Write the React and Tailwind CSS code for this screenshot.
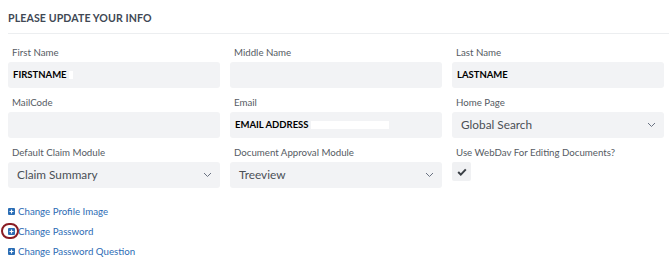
import React from 'react';

const font = { fontFamily: 'Lato, "Open Sans", sans-serif' };

function Chevron() {
  return (
    <svg width="9" height="6" viewBox="0 0 9 6" className="text-gray-500">
      <path d="M1 1l3.5 3.5L8 1" fill="none" stroke="currentColor" strokeWidth="1" />
    </svg>
  );
}

function Field({ label, children }) {
  return (
    <div className="flex flex-col">
      <div className="h-[16px] pl-[4px] text-[9.7px] leading-[12px] text-[#555b63]">{label}</div>
      {children}
    </div>
  );
}

function TextBox({ value, blot }) {
  return (
    <div className="flex h-[26px] items-center rounded-[3px] bg-[#f2f3f5] px-[5px] text-[9.5px] font-bold text-black">
      {value}
      {blot && <span className={`ml-[2px] h-[8px] bg-white ${blot}`} />}
    </div>
  );
}

function Select({ value }) {
  return (
    <div className="flex h-[26px] items-center justify-between rounded-[3px] bg-[#f2f3f5] pl-[9px] pr-[8px] text-[11.8px] text-[#4a4f55]">
      <span>{value}</span>
      <Chevron />
    </div>
  );
}

function PlusIcon() {
  return (
    <svg width="7" height="7" viewBox="0 0 7 7" className="shrink-0">
      <rect width="7" height="7" rx="1" fill="#2a6db5" />
      <path d="M3.5 1.5v4M1.5 3.5h4" stroke="white" strokeWidth="1.2" />
    </svg>
  );
}

function LinkRow({ label, circled }) {
  return (
    <div className="relative flex h-[20px] items-center gap-[3px] text-[9.7px] text-[#2d6cb5]">
      <PlusIcon />
      <span>{label}</span>
      {circled && (
        <span className="absolute left-[-7px] top-[2px] h-[16px] w-[18px] rounded-full border-2 border-[#8a1d24]" />
      )}
    </div>
  );
}

export default function App() {
  return (
    <div className="h-[258px] w-[669px] overflow-hidden bg-white" style={font}>
      <div className="px-[8px] pt-[11px]">
        <div className="h-[22px] text-[10.6px] font-bold leading-[14px] tracking-[0.1px] text-[#404854]">
          PLEASE UPDATE YOUR INFO
        </div>
      </div>
      <div className="ml-[8px] border-t border-[#eceef0]" />
      <div className="grid grid-cols-3 gap-x-[10px] gap-y-[8px] pl-[8px] pr-[5px] pt-[12px]">
        <Field label="First Name"><TextBox value="FIRSTNAME" blot="w-[4px]" /></Field>
        <Field label="Middle Name"><TextBox value="" /></Field>
        <Field label="Last Name"><TextBox value="LASTNAME" /></Field>
        <Field label="MailCode"><TextBox value="" /></Field>
        <Field label="Email"><TextBox value="EMAIL ADDRESS" blot="w-[78px]" /></Field>
        <Field label="Home Page"><Select value="Global Search" /></Field>
        <Field label="Default Claim Module"><Select value="Claim Summary" /></Field>
        <Field label="Document Approval Module"><Select value="Treeview" /></Field>
        <Field label="Use WebDav For Editing Documents?">
          <div className="flex h-[19px] w-[19px] items-center justify-center rounded-[2px] bg-[#f0f1f3]">
            <svg width="10" height="8" viewBox="0 0 10 8">
              <path d="M1.2 4l2.6 2.6L8.8 1.4" fill="none" stroke="#3a3f45" strokeWidth="2" />
            </svg>
          </div>
        </Field>
      </div>
      <div className="flex flex-col pl-[8px] pt-[13px]">
        <LinkRow label="Change Profile Image" />
        <LinkRow label="Change Password" circled />
        <LinkRow label="Change Password Question" />
      </div>
    </div>
  );
}
